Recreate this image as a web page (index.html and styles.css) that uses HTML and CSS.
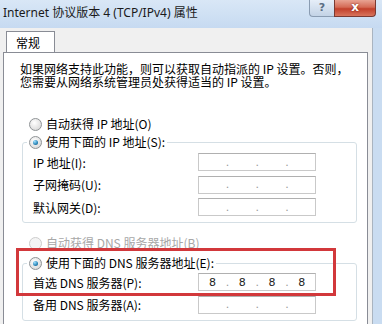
FILE: index.html
```html
<!DOCTYPE html>
<html lang="zh-CN">
<head>
  <meta charset="UTF-8">
  <title>Internet 协议版本 4 (TCP/IPv4) 属性</title>
  <link rel="stylesheet" href="styles.css">
</head>
<body>
  <div class="window">
    <!-- Title bar -->
    <div class="titlebar">
      <span class="title">Internet 协议版本 4 (TCP/IPv4) 属性</span>
      <div class="caption-btns">
        <span class="btn-help">?</span>
        <span class="btn-close">x</span>
      </div>
    </div>

    <div class="dialog-body">
      <div class="tabs"><span class="tab">常规</span></div>

      <div class="page">
        <p class="intro">如果网络支持此功能，则可以获取自动指派的 IP 设置。否则，<br>您需要从网络系统管理员处获得适当的 IP 设置。</p>

        <div class="radio-row first-row"><span class="radio"></span>自动获得 IP 地址(O)</div>

        <fieldset class="group ip-group">
          <legend><span class="radio checked"></span>使用下面的 IP 地址(S):</legend>
          <div class="field">
            <span class="label">IP 地址(I):</span>
            <span class="ip-box"><span class="octet"></span><span class="dot">.</span><span class="octet"></span><span class="dot">.</span><span class="octet"></span><span class="dot">.</span><span class="octet"></span></span>
          </div>
          <div class="field">
            <span class="label">子网掩码(U):</span>
            <span class="ip-box"><span class="octet"></span><span class="dot">.</span><span class="octet"></span><span class="dot">.</span><span class="octet"></span><span class="dot">.</span><span class="octet"></span></span>
          </div>
          <div class="field">
            <span class="label">默认网关(D):</span>
            <span class="ip-box"><span class="octet"></span><span class="dot">.</span><span class="octet"></span><span class="dot">.</span><span class="octet"></span><span class="dot">.</span><span class="octet"></span></span>
          </div>
        </fieldset>

        <div class="radio-row disabled"><span class="radio"></span>自动获得 DNS 服务器地址(B)</div>

        <fieldset class="group dns-group">
          <legend><span class="radio checked"></span>使用下面的 DNS 服务器地址(E):</legend>
          <div class="field">
            <span class="label">首选 DNS 服务器(P):</span>
            <span class="ip-box"><span class="octet">8</span><span class="dot">.</span><span class="octet">8</span><span class="dot">.</span><span class="octet">8</span><span class="dot">.</span><span class="octet">8</span></span>
          </div>
          <div class="field">
            <span class="label">备用 DNS 服务器(A):</span>
            <span class="ip-box"><span class="octet"></span><span class="dot">.</span><span class="octet"></span><span class="dot">.</span><span class="octet"></span><span class="dot">.</span><span class="octet"></span></span>
          </div>
        </fieldset>

        <!-- red annotation box over the DNS settings -->
        <div class="highlight"></div>
      </div>
    </div>
  </div>
</body>
</html>
```

FILE: styles.css
```css
body {
  margin: 0;
  padding: 0;
  font-family: "Noto Sans CJK SC", "Noto Sans", sans-serif;
  font-size: 12px;
  color: #000;
  background: #c4d9f0;
}
.window {
  width: 382px;
  height: 324px;
  overflow: hidden;
  display: flex;
  flex-direction: column;
  background: linear-gradient(90deg, #b9c9d9 0, #c9dcf1 3px, #c9dcf1 100%);
}
.titlebar {
  height: 28px;
  flex-shrink: 0;
  display: flex;
  justify-content: space-between;
  align-items: flex-start;
  background: linear-gradient(#d9e7f6, #c6daf1);
}
.title {
  font-family: "Noto Sans", "Noto Sans CJK SC", sans-serif;
  font-size: 12px;
  line-height: 16px;
  margin: 5px 0 0 3px;
  color: #1a1a1a;
}
.caption-btns {
  display: flex;
  margin-right: 6px;
}
.btn-help {
  width: 25px;
  height: 17px;
  box-sizing: border-box;
  border: 1px solid #8a9cb2;
  border-top: none;
  border-right: none;
  border-radius: 0 0 0 4px;
  background: linear-gradient(#e6eef8, #c3d3e6);
  color: #5a6d84;
  font-family: "DejaVu Sans", sans-serif;
  font-size: 11px;
  font-weight: bold;
  text-align: center;
  line-height: 15px;
}
.btn-close {
  width: 42px;
  height: 17px;
  box-sizing: border-box;
  border: 1px solid #7a3a32;
  border-top: none;
  border-radius: 0 0 4px 0;
  background: linear-gradient(#e8a393, #d46a55 45%, #c2402b 55%, #d8745c);
  color: #fff;
  font-family: "DejaVu Sans", sans-serif;
  font-size: 12px;
  font-weight: bold;
  text-align: center;
  line-height: 14px;
  text-shadow: 0 0 2px #6b1a10;
}
.dialog-body {
  flex: 1;
  min-height: 0;
  overflow: hidden;
  margin-right: 9px;
  padding-left: 3px;
  padding-right: 4px;
  background: #f0f0f0;
  border-right: 1px solid #a9b4c0;
}
.tabs {
  height: 24px;
  display: flex;
  align-items: flex-end;
  padding-left: 3px;
}
.tab {
  width: 49px;
  height: 22px;
  box-sizing: border-box;
  border: 1px solid #898c95;
  border-bottom: none;
  background: #fff;
  line-height: 22px;
  padding-left: 9px;
  position: relative;
  top: 1px;
}
.page {
  position: relative;
  height: 290px;
  background: #fff;
  border: 1px solid #898c95;
  box-sizing: border-box;
}
.intro {
  margin: 10px 0 0 16px;
  line-height: 12.5px;
  white-space: nowrap;
}
.radio-row {
  display: flex;
  align-items: center;
  height: 14px;
  line-height: 14px;
}
.first-row {
  margin: 29px 0 0 25px;
}
.disabled {
  margin: 13px 0 0 25px;
  color: #a8a8a8;
}
.radio {
  display: inline-block;
  width: 11px;
  height: 11px;
  border: 1px solid #8f9396;
  border-radius: 50%;
  margin-right: 4px;
  flex-shrink: 0;
  background: radial-gradient(circle at 40% 35%, #ffffff, #dedede 70%, #cfcfcf);
  position: relative;
}
.disabled .radio {
  border-color: #cdcdcd;
  background: #f4f4f4;
}
.radio.checked::after {
  content: "";
  position: absolute;
  left: 3px;
  top: 3px;
  width: 5px;
  height: 5px;
  border-radius: 50%;
  background: radial-gradient(circle at 35% 30%, #9fe0ff, #2a86b8 60%, #1a4f72);
}
.group {
  margin: 4px 10px 0 18px;
  padding: 4px 0 6px 10px;
  border: 1px solid #d5dfe5;
  border-radius: 3px;
  min-width: 0;
}
.dns-group {
  margin-top: 6px;
  padding-top: 3px;
}
.group legend {
  display: flex;
  align-items: center;
  height: 14px;
  line-height: 14px;
  margin-left: -6px;
  padding: 0 2px;
}
.field {
  display: flex;
  align-items: center;
  height: 18px;
  margin-bottom: 4.5px;
}
.field:last-child {
  margin-bottom: 0;
}
.label {
  width: 165px;
}
.ip-box {
  display: flex;
  width: 118px;
  height: 18px;
  box-sizing: border-box;
  border: 1px solid #c9c9c9;
  border-top-color: #b0b0b0;
  align-items: center;
  font-family: "DejaVu Sans", sans-serif;
  font-size: 11px;
  color: #222;
}
.octet {
  flex: 1;
  text-align: center;
}
.dot {
  width: 3px;
  color: #999;
  text-align: center;
}
.highlight {
  position: absolute;
  left: 12px;
  top: 195px;
  width: 320px;
  height: 48px;
  box-sizing: border-box;
  border: 3px solid #d2383b;
}
```
